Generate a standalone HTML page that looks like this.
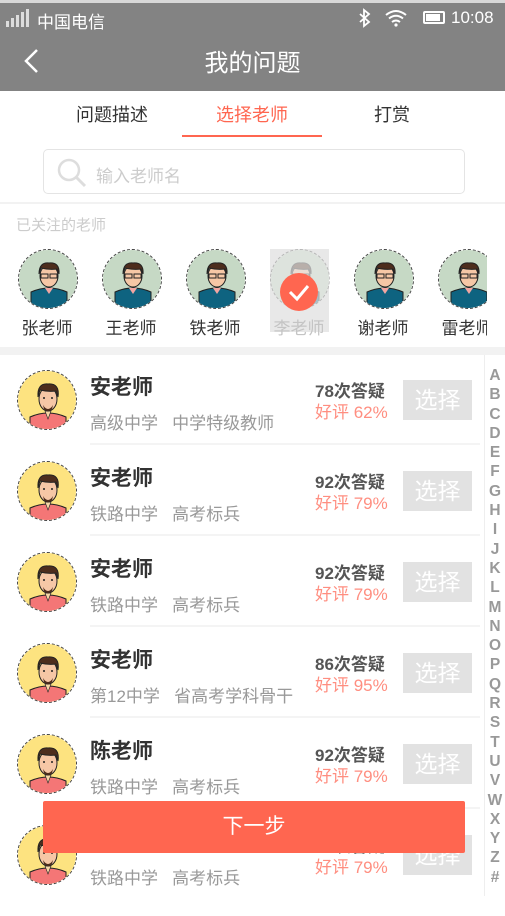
<!DOCTYPE html>
<html><head><meta charset="utf-8">
<style>
*{margin:0;padding:0;box-sizing:border-box}
body{width:505px;height:896px;overflow:hidden;background:#fff;font-family:"Liberation Sans","Noto Sans CJK SC",sans-serif;position:relative}
.abs{position:absolute}
.status{left:0;top:0;width:505px;height:36px;background:#838383;border-top:3px solid #d8d8d8;color:#fff;font-size:17px}
.nav{left:0;top:36px;width:505px;height:55px;background:#838383;color:#fff;font-size:24px;text-align:center;line-height:55px}
.tab{top:91px;height:46px;line-height:48px;font-size:18px;color:#333;text-align:center}
.av{width:60px;height:60px;border-radius:50%;border:1px dashed #444;overflow:hidden}
.fname{font-size:17px;color:#333;width:84px;text-align:center}
.row{left:0;width:480px;height:91px}
.row .n{position:absolute;left:90px;top:1px;font-size:21px;font-weight:bold;color:#333}
.row .s{position:absolute;left:90px;top:39px;font-size:17px;color:#999;word-spacing:0}
.row .c{position:absolute;left:315px;top:7px;font-size:17px;font-weight:bold;color:#555}
.row .p{position:absolute;left:315px;top:28px;font-size:17px;color:#ff8e80}
.row .b{position:absolute;left:403px;top:10px;width:69px;height:40px;background:#e2e2e2;color:#fff;font-size:23px;text-align:center;line-height:40px}
.row .l{position:absolute;left:90px;top:73px;width:390px;height:2px;background:#f4f4f4}
.idx{left:486px;top:366px;width:18px;font-size:15.5px;font-weight:bold;color:#999;text-align:center;line-height:19.3px}
</style></head><body>
<svg width="0" height="0" style="position:absolute">
<defs>
<g id="m1">
<rect width="60" height="60" fill="#c6d9c5"/>
<path d="M12 42 Q30 34 48 42 L48 60 L12 60Z" fill="#0e6380" stroke="#222" stroke-width="1"/>
<path d="M26 38 L30 44 L34 38Z" fill="#f3a6a2"/>
<ellipse cx="30" cy="26" rx="9" ry="11" fill="#f6c7a6" stroke="#222" stroke-width="1"/>
<path d="M20 24 Q20 12 30 13 Q41 12 40 24 L38 19 Q30 20 22 18Z" fill="#4d2d1d" stroke="#222" stroke-width="1"/>
<rect x="22" y="24" width="7" height="4" fill="none" stroke="#222" stroke-width="1"/>
<rect x="31" y="24" width="7" height="4" fill="none" stroke="#222" stroke-width="1"/>
</g>
<g id="m2">
<rect width="60" height="60" fill="#fde380"/>
<path d="M12 46 Q30 38 48 46 L48 60 L12 60Z" fill="#f47676" stroke="#222" stroke-width="1"/>
<path d="M27 40 L30 48 L33 40Z" fill="#f7d6a6" stroke="#222" stroke-width=".6"/>
<ellipse cx="30" cy="28" rx="9" ry="12" fill="#f6c7a6" stroke="#222" stroke-width="1"/>
<path d="M20 26 Q19 12 30 13 Q42 12 40 26 L38 20 Q30 21 22 19Z" fill="#4d2d1d" stroke="#222" stroke-width="1"/>
<path d="M25 34 Q30 42 35 34 L34 38 Q30 42 26 38Z" fill="#4d2d1d"/>
<circle cx="26" cy="27" r="1" fill="#222"/><circle cx="34" cy="27" r="1" fill="#222"/>
</g>
</defs></svg>

<div class="abs status">
<div class="abs" style="left:6px;top:6px;width:23px;height:18px">
<svg width="23" height="18"><g fill="#ddd"><rect x="0" y="12" width="3" height="6"/><rect x="5" y="9" width="3" height="9"/><rect x="10" y="6" width="3" height="12"/><rect x="15" y="3" width="3" height="15"/><rect x="20" y="0" width="3" height="18"/></g></svg></div>
<div class="abs" style="left:37px;top:5px">中国电信</div>
<svg class="abs" style="left:358px;top:5px" width="14" height="20"><path d="M2 6 L11 14 L6 18 L6 2 L11 6 L2 14" fill="none" stroke="#fff" stroke-width="1.8"/></svg>
<svg class="abs" style="left:384px;top:6px" width="24" height="18"><path d="M2 6 Q12 -2 22 6 M5 9.5 Q12 4 19 9.5 M8 13 Q12 10 16 13" fill="none" stroke="#fff" stroke-width="2"/><circle cx="12" cy="16" r="1.6" fill="#fff"/></svg>
<div class="abs" style="left:423px;top:8px;width:22px;height:13px;border:2px solid #fff;border-radius:2px"><div style="margin:1px;width:14px;height:7px;background:#fff"></div></div>
<div class="abs" style="left:451px;top:5px;font-size:17px">10:08</div>
</div>
<div class="abs nav">我的问题</div>
<svg class="abs" style="left:22px;top:48px" width="18" height="26"><path d="M15 2 L4 13 L15 24" fill="none" stroke="#fff" stroke-width="2.5"/></svg>

<div class="abs tab" style="left:42px;width:140px">问题描述</div>
<div class="abs tab" style="left:182px;width:140px;color:#ff6650">选择老师</div>
<div class="abs tab" style="left:322px;width:140px">打赏</div>
<div class="abs" style="left:182px;top:135px;width:140px;height:2px;background:#ff6650"></div>

<div class="abs" style="left:43px;top:149px;width:422px;height:45px;border:1px solid #e4e4e4;border-radius:5px"></div>
<svg class="abs" style="left:56px;top:157px" width="32" height="32"><circle cx="13" cy="13" r="10" fill="none" stroke="#ddd" stroke-width="2.5"/><path d="M20 20 L29 29" stroke="#ddd" stroke-width="3"/></svg>
<div class="abs" style="left:96px;top:162px;font-size:17px;color:#ccc">输入老师名</div>
<div class="abs" style="left:0;top:202px;width:505px;height:2px;background:#f2f2f2"></div>

<div class="abs" style="left:16px;top:214px;font-size:15px;color:#ccc">已关注的老师</div>
<div class="abs" style="left:0;top:249px;width:487px;height:90px;overflow:hidden">
<div class="abs av" style="left:18px;top:0"><svg width="60" height="60"><use href="#m1"/></svg></div>
<div class="abs av" style="left:102px;top:0"><svg width="60" height="60"><use href="#m1"/></svg></div>
<div class="abs av" style="left:186px;top:0"><svg width="60" height="60"><use href="#m1"/></svg></div>
<div class="abs" style="left:270px;top:0;width:59px;height:83px;background:#e8e8e8"></div>
<div class="abs av" style="left:270px;top:0;opacity:.3"><svg width="60" height="60"><use href="#m1"/></svg></div>
<div class="abs" style="left:280px;top:24px;width:38px;height:38px;border-radius:50%;background:#ff6650"></div>
<svg class="abs" style="left:280px;top:24px" width="38" height="38"><path d="M10 19 L17 26 L28 13" fill="none" stroke="#fff" stroke-width="3"/></svg>
<div class="abs av" style="left:354px;top:0"><svg width="60" height="60"><use href="#m1"/></svg></div>
<div class="abs av" style="left:438px;top:0"><svg width="60" height="60"><use href="#m1"/></svg></div>
<div class="abs fname" style="left:5px;top:65px">张老师</div>
<div class="abs fname" style="left:89px;top:65px">王老师</div>
<div class="abs fname" style="left:173px;top:65px">铁老师</div>
<div class="abs fname" style="left:257px;top:65px;color:#c4c4c4">李老师</div>
<div class="abs fname" style="left:341px;top:65px">谢老师</div>
<div class="abs fname" style="left:425px;top:65px">雷老师</div>
</div>
<div class="abs" style="left:0;top:347px;width:505px;height:8px;background:#f2f2f2"></div>
<div class="abs" style="left:484px;top:355px;width:1px;height:541px;background:#eee"></div>

<div class="abs row" style="top:370px"><div class="abs av" style="left:17px;top:0"><svg width="60" height="60"><use href="#m2"/></svg></div><div class="n">安老师</div><div class="s">高级中学&nbsp;&nbsp;&nbsp;中学特级教师</div><div class="c">78次答疑</div><div class="p">好评 62%</div><div class="b">选择</div><div class="l"></div></div>
<div class="abs row" style="top:461px"><div class="abs av" style="left:17px;top:0"><svg width="60" height="60"><use href="#m2"/></svg></div><div class="n">安老师</div><div class="s">铁路中学&nbsp;&nbsp;&nbsp;高考标兵</div><div class="c">92次答疑</div><div class="p">好评 79%</div><div class="b">选择</div><div class="l"></div></div>
<div class="abs row" style="top:552px"><div class="abs av" style="left:17px;top:0"><svg width="60" height="60"><use href="#m2"/></svg></div><div class="n">安老师</div><div class="s">铁路中学&nbsp;&nbsp;&nbsp;高考标兵</div><div class="c">92次答疑</div><div class="p">好评 79%</div><div class="b">选择</div><div class="l"></div></div>
<div class="abs row" style="top:643px"><div class="abs av" style="left:17px;top:0"><svg width="60" height="60"><use href="#m2"/></svg></div><div class="n">安老师</div><div class="s">第12中学&nbsp;&nbsp;&nbsp;省高考学科骨干</div><div class="c">86次答疑</div><div class="p">好评 95%</div><div class="b">选择</div><div class="l"></div></div>
<div class="abs row" style="top:734px"><div class="abs av" style="left:17px;top:0"><svg width="60" height="60"><use href="#m2"/></svg></div><div class="n">陈老师</div><div class="s">铁路中学&nbsp;&nbsp;&nbsp;高考标兵</div><div class="c">92次答疑</div><div class="p">好评 79%</div><div class="b">选择</div><div class="l"></div></div>
<div class="abs row" style="top:825px"><div class="abs av" style="left:17px;top:0"><svg width="60" height="60"><use href="#m2"/></svg></div><div class="n">陈老师</div><div class="s">铁路中学&nbsp;&nbsp;&nbsp;高考标兵</div><div class="c">92次答疑</div><div class="p">好评 79%</div><div class="b">选择</div></div>

<div class="abs idx">A<br>B<br>C<br>D<br>E<br>F<br>G<br>H<br>I<br>J<br>K<br>L<br>M<br>N<br>O<br>P<br>Q<br>R<br>S<br>T<br>U<br>V<br>W<br>X<br>Y<br>Z<br>#</div>

<div class="abs" style="left:43px;top:801px;width:422px;height:52px;background:#ff6650;border-radius:2px;color:#fff;font-size:21px;text-align:center;line-height:52px">下一步</div>
</body></html>
